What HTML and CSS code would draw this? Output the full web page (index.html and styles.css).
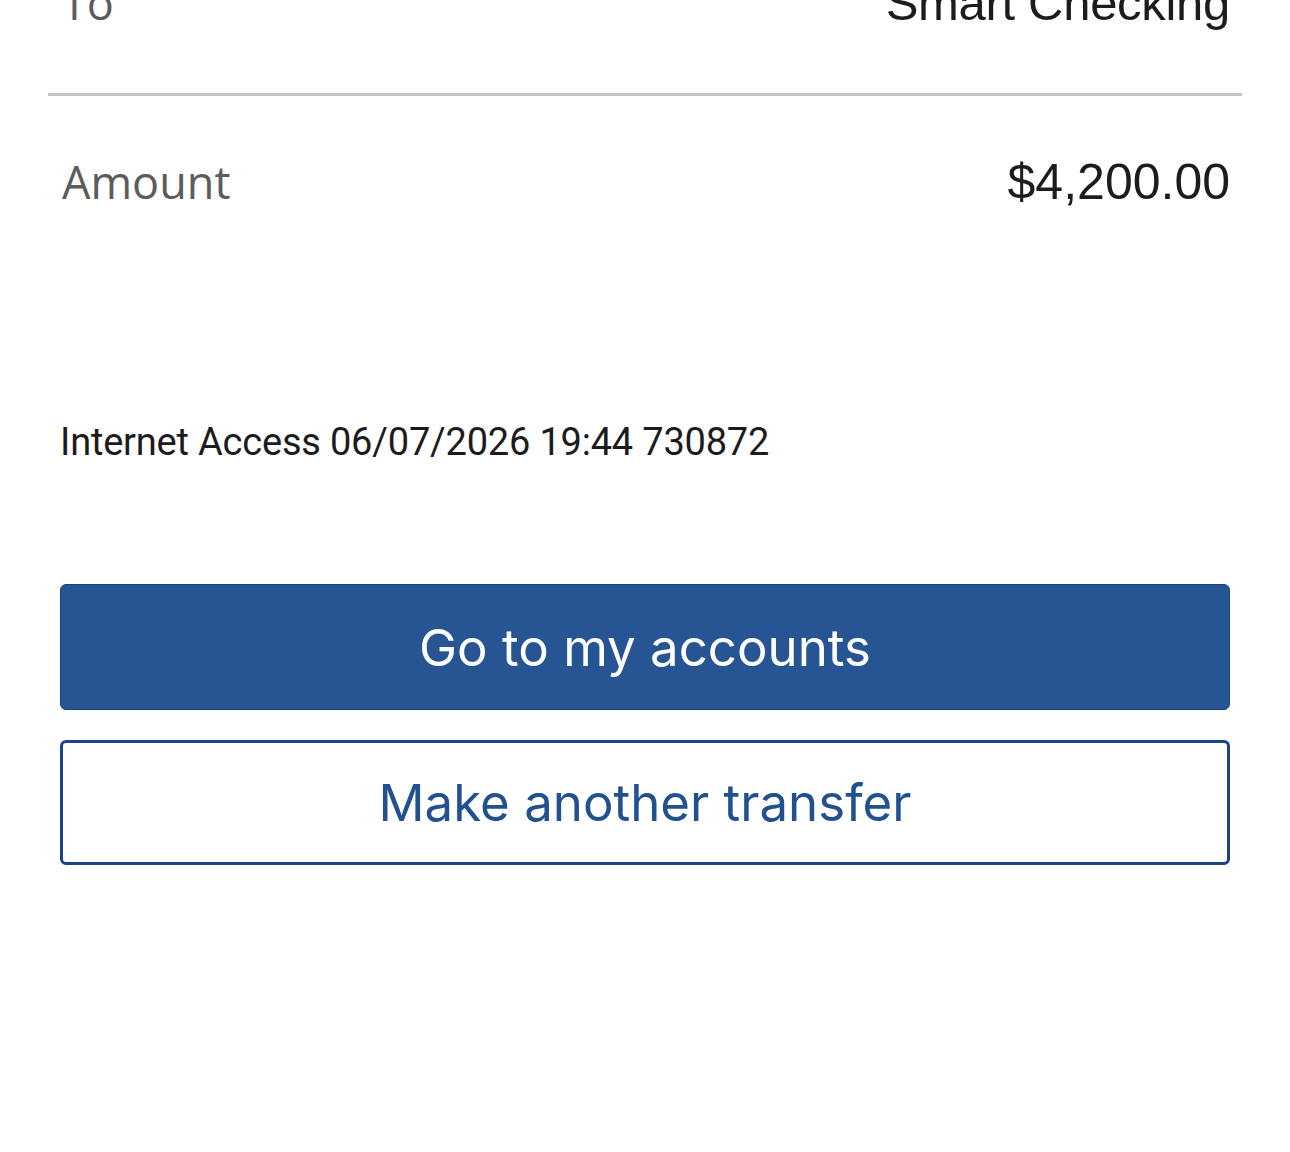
FILE: index.html
```html
<!DOCTYPE html>
<html lang="en">
<head>
<meta charset="utf-8">
<title>Transfer complete</title>
<link rel="stylesheet" href="styles.css">
</head>
<body>
<main class="page">
  <section class="details">
    <div class="row row-first">
      <span class="label">To</span>
      <span class="value value-account">Smart Checking</span>
    </div>
    <hr class="divider">
    <div class="row row-amount">
      <span class="label">Amount</span>
      <span class="value">$4,200.00</span>
    </div>
  </section>
  <p class="reference">Internet Access 06/07/2026 19:44 730872</p>
  <div class="actions">
    <button class="btn btn-primary" type="button">Go to my accounts</button>
    <button class="btn btn-secondary" type="button">Make another transfer</button>
  </div>
</main>
</body>
</html>
```
FILE: styles.css
```css
html, body {
  margin: 0;
  padding: 0;
  background: #ffffff;
}

.page {
  display: flex;
  flex-direction: column;
  padding: 0 60px;
  font-family: "Inter", "Roboto", "Liberation Sans", sans-serif;
}

.details {
  display: flex;
  flex-direction: column;
  margin: -27px -12px 0;
}

.row {
  display: flex;
  justify-content: space-between;
  align-items: baseline;
  padding: 0 12px 0 14px;
  line-height: 60px;
}

.row-amount {
  padding-top: 56px;
}

.label {
  font-family: "Open Sans", "Liberation Sans", sans-serif;
  font-size: 45px;
  color: #5c5c5c;
}

.value {
  font-family: "Liberation Sans", Arial, sans-serif;
  font-size: 50px;
  color: #1c1c1c;
}

.value-account {
  font-size: 49px;
  letter-spacing: -0.3px;
}

.divider {
  margin: 60px 0 0;
  border: 0;
  height: 3px;
  background: #c4c4c4;
}

.reference {
  margin: 208px 0 0;
  font-family: "Roboto", "Liberation Sans", sans-serif;
  font-size: 38px;
  line-height: 44px;
  letter-spacing: -0.2px;
  color: #1c1c1c;
}

.actions {
  display: flex;
  flex-direction: column;
  gap: 30px;
  margin-top: 120px;
}

.btn {
  display: flex;
  align-items: center;
  justify-content: center;
  width: 100%;
  height: 126px;
  border-radius: 6px;
  font-family: "Inter", "Roboto", sans-serif;
  font-size: 51px;
  font-weight: 400;
  padding: 0;
  cursor: pointer;
}

.btn-primary {
  background: #275594;
  border: 1px solid #1b4382;
  color: #ffffff;
}

.btn-secondary {
  height: 125px;
  background: #ffffff;
  border: 3px solid #1a438a;
  color: #21518f;
}
```
